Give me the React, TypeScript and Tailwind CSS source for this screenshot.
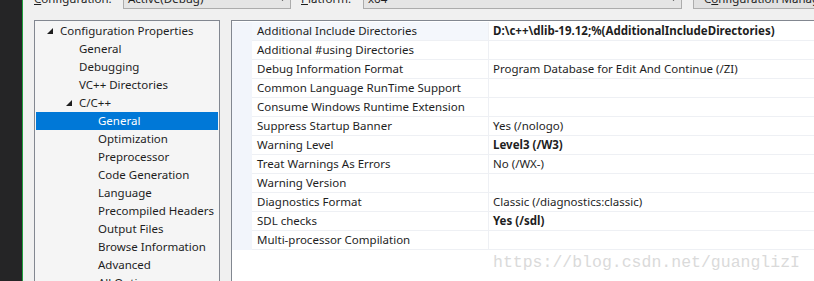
import React from "react";

const treeItems = [
  { label: "Configuration Properties", level: 0, expander: true },
  { label: "General", level: 1 },
  { label: "Debugging", level: 1 },
  { label: "VC++ Directories", level: 1 },
  { label: "C/C++", level: 1, expander: true },
  { label: "General", level: 2, selected: true },
  { label: "Optimization", level: 2 },
  { label: "Preprocessor", level: 2 },
  { label: "Code Generation", level: 2 },
  { label: "Language", level: 2 },
  { label: "Precompiled Headers", level: 2 },
  { label: "Output Files", level: 2 },
  { label: "Browse Information", level: 2 },
  { label: "Advanced", level: 2 },
  { label: "All Options", level: 2 },
];

const props = [
  { name: "Additional Include Directories", value: "D:\\c++\\dlib-19.12;%(AdditionalIncludeDirectories)", bold: true, active: true },
  { name: "Additional #using Directories", value: "" },
  { name: "Debug Information Format", value: "Program Database for Edit And Continue (/ZI)" },
  { name: "Common Language RunTime Support", value: "" },
  { name: "Consume Windows Runtime Extension", value: "" },
  { name: "Suppress Startup Banner", value: "Yes (/nologo)" },
  { name: "Warning Level", value: "Level3 (/W3)", bold: true },
  { name: "Treat Warnings As Errors", value: "No (/WX-)" },
  { name: "Warning Version", value: "" },
  { name: "Diagnostics Format", value: "Classic (/diagnostics:classic)" },
  { name: "SDL checks", value: "Yes (/sdl)", bold: true },
  { name: "Multi-processor Compilation", value: "" },
];

const Expander = () => (
  <svg width="6" height="6" viewBox="0 0 6 6" className="shrink-0">
    <polygon points="6,0 6,6 0,6" fill="#1e1e1e" />
  </svg>
);

const Arrow = () => (
  <svg width="7" height="4" viewBox="0 0 7 4">
    <polygon points="0,0 7,0 3.5,4" fill="#444" />
  </svg>
);

const App = () => {
  return (
    <div
      className="relative flex w-[814px] h-[281px] overflow-hidden bg-[#f0f0f0] text-[11.5px] text-[#1e1e1e]"
      style={{ fontFamily: "'Noto Sans', 'Liberation Sans', sans-serif" }}
    >
      <div className="w-[22px] shrink-0 bg-[#252526]" />
      <div className="w-px shrink-0 bg-[#1e9f3e]" />
      <div className="flex flex-col flex-1 min-w-0">
        {/* top toolbar, mostly scrolled out of view */}
        <div className="h-[20px] shrink-0 flex items-start">
          <div className="flex items-center -mt-[12px] h-[21px]">
            <span className="ml-[11px] w-[89px] leading-none">
              <span className="underline">C</span>onfiguration:
            </span>
            <div className="w-[168px] h-[21px] border border-[#acacac] bg-[#e5e5e5] flex items-center justify-between pl-[4px] pr-[4px]">
              <span>Active(Debug)</span>
              <Arrow />
            </div>
            <span className="ml-[10px] w-[62px]">
              <span className="underline">P</span>latform:
            </span>
            <div className="w-[319px] h-[21px] border border-[#acacac] bg-[#e5e5e5] flex items-center justify-between pl-[4px] pr-[4px]">
              <span>x64</span>
              <Arrow />
            </div>
            <div className="ml-[11px] w-[140px] h-[21px] border border-[#adadad] bg-[#e1e1e1] flex items-center pl-[10px] whitespace-nowrap">
              C<span className="underline">o</span>nfiguration Manager
            </div>
          </div>
        </div>

        <div className="flex flex-1 min-h-0">
          {/* tree */}
          <div className="ml-[11px] w-[186px] shrink-0 border border-b-0 border-[#828790] bg-[#f5f5f5] pt-px pl-px pr-px">
            {treeItems.map((item, i) => (
              <div
                key={i}
                className={`h-[18px] flex items-center whitespace-nowrap ${
                  item.selected ? "bg-[#0078d7] text-white" : ""
                }`}
              >
                <div
                  className={`flex items-center ${
                    item.level == 0 ? "pl-[11px]" : item.level == 1 ? "pl-[30px]" : "pl-[62px]"
                  }`}
                >
                  {item.expander && (
                    <span className="w-[13px] flex items-center">
                      <Expander />
                    </span>
                  )}
                  {item.level == 1 && !item.expander && <span className="w-[13px]" />}
                  <span>{item.label}</span>
                </div>
              </div>
            ))}
          </div>

          {/* property grid */}
          <div className="ml-[11px] flex-1 border-l border-t border-[#828790] bg-white pt-px">
            {props.map((p, i) => (
              <div key={i} className="flex h-[19px] whitespace-nowrap">
                <div className="w-[20px] shrink-0 bg-[#f2f5fb]" />
                <div
                  className={`w-[237px] shrink-0 border-b border-r border-[#eef0f4] pl-[5px] flex items-center ${
                    p.active ? "bg-[#f4f7fc]" : ""
                  }`}
                >
                  {p.name}
                </div>
                <div
                  className={`flex-1 border-b border-[#eef0f4] pl-[4px] flex items-center ${
                    p.bold ? "font-bold" : ""
                  }`}
                >
                  {p.value}
                </div>
              </div>
            ))}
          </div>
        </div>
      </div>

      {/* blog watermark */}
      <div
        className="absolute left-[493px] top-[251px] text-[16.5px] text-[#dadada]"
        style={{ fontFamily: "'Liberation Mono', monospace" }}
      >
        https://blog.csdn.net/guanglizI
      </div>
    </div>
  );
};

export default App;
